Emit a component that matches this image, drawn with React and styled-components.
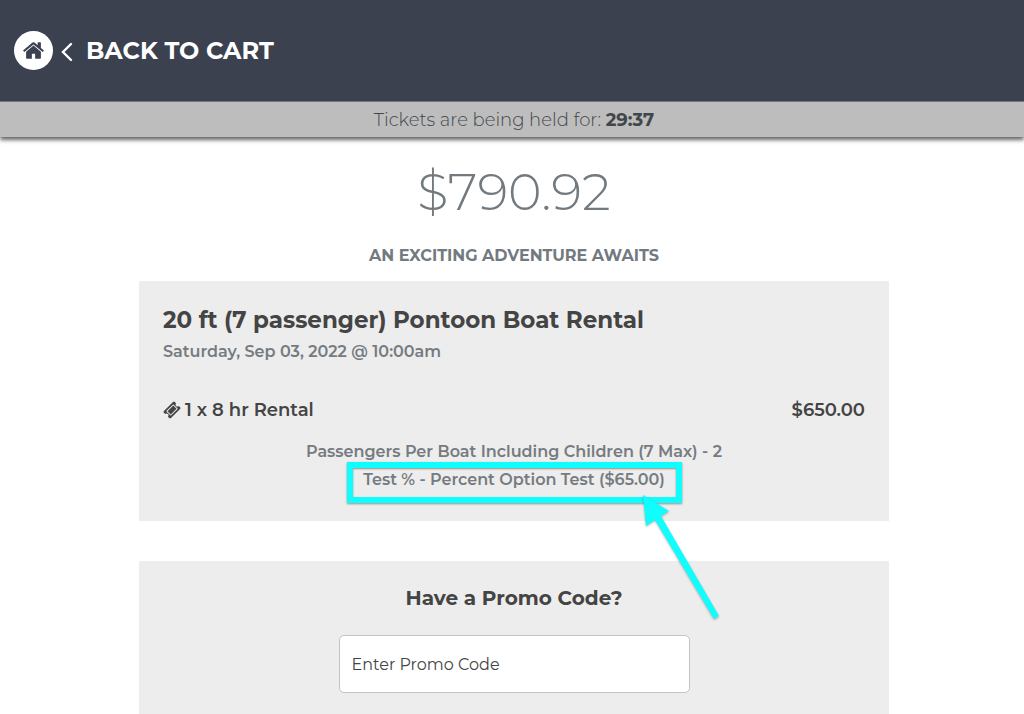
import React from "react";
import styled, { createGlobalStyle } from "styled-components";

const GlobalStyle = createGlobalStyle`
  *, *::before, *::after { box-sizing: border-box; }
  body {
    margin: 0;
    background: #fff;
    color: #444;
    font-family: Montserrat, Inter, "Open Sans", sans-serif;
    font-size: 16px;
    line-height: 24px;
  }
`;

const Header = styled.header`
  display: flex;
  align-items: center;
  gap: 7px;
  min-height: 101px;
  padding: 0 14px;
  background: #3c4150;
`;

const HomeLink = styled.a`
  display: grid;
  place-items: center;
  width: 39px;
  height: 39px;
  border-radius: 50%;
  background: #fff;
  color: #3c4150;
`;

const BackLink = styled.a`
  display: flex;
  align-items: center;
  gap: 12px;
  color: #fff;
  font-size: 24px;
  font-weight: 700;
  line-height: 32px;
  text-decoration: none;
  text-transform: uppercase;
`;

const HoldBar = styled.div`
  padding: 6px 0 5px 4px;
  border-top: 1px solid #747985;
  background: #bdbdbd;
  box-shadow: 0 3px 4px rgba(0, 0, 0, 0.6);
  color: #3f474c;
  font-size: 18px;
  font-weight: 300;
  text-align: center;

  strong { font-weight: 700; }
`;

const Main = styled.main`
  display: flex;
  flex-direction: column;
  align-items: center;
  padding: 23px 12px 0 16px;
`;

const Total = styled.p`
  margin: 0;
  color: #727a7f;
  font-size: 51px;
  font-weight: 300;
  line-height: 64px;
`;

const Tagline = styled.p`
  margin: 20px 0 13px;
  color: #727a7f;
  font-weight: 700;
  text-transform: uppercase;
`;

const Card = styled.section`
  width: 100%;
  max-width: 750px;
  margin-bottom: 40px;
  padding: 24px;
  background: #ededed;
`;

const Title = styled.h1`
  margin: 0 0 3px;
  font-size: 23px;
  font-weight: 700;
  line-height: 30px;
`;

const Muted = styled.p`
  margin: 0;
  color: #757b80;
  font-weight: 600;
  line-height: 28px;
`;

const LineItem = styled.div`
  display: flex;
  align-items: center;
  justify-content: space-between;
  margin: 32px 0 16px;
  font-size: 18px;
  font-weight: 600;
`;

const ItemName = styled.span`
  display: flex;
  align-items: center;
  gap: 4px;
`;

const Options = styled.div`
  display: flex;
  flex-direction: column;
  align-items: center;
  padding-bottom: 3px;
`;

const Highlighted = styled(Muted)`
  position: relative;

  &::after {
    content: "";
    position: absolute;
    inset: -4px -17px -9px -16px;
    border: 6px solid #10fdfd;
    box-shadow: 0 1px 2px rgba(0, 0, 0, 0.4), inset 0 1px 2px rgba(0, 0, 0, 0.4);
  }
`;

const Arrow = styled.svg`
  position: absolute;
  z-index: 1;
  top: 29px;
  right: -56px;
  overflow: visible;
  filter: drop-shadow(0 1px 1px rgba(0, 0, 0, 0.3));
`;

const PromoForm = styled.form`
  display: flex;
  flex-direction: column;
  align-items: center;
  gap: 24px;
`;

const PromoLabel = styled.label`
  font-size: 20px;
  font-weight: 700;
  line-height: 26px;
`;

const PromoInput = styled.input`
  width: 351px;
  max-width: 100%;
  height: 58px;
  padding: 0 12px;
  border: 1px solid #c4c4c4;
  border-radius: 5px;
  background: #fff;
  color: #444;
  font: inherit;

  &::placeholder { color: #444; opacity: 1; }
`;

function HomeIcon() {
  return (
    <svg width="23" height="23" viewBox="0 0 1792 1792" fill="currentColor" aria-hidden="true">
      <path d="M1472 992v480q0 26-19 45t-45 19h-384v-384h-256v384h-384q-26 0-45-19t-19-45v-480q0-1 .5-3t.5-3l575-474 575 474q1 2 1 6zm223-69l-62 74q-8 9-21 11h-3q-13 0-21-7l-692-577-692 577q-12 8-24 7-13-2-21-11l-62-74q-8-10-7-23.5t11-21.5l719-599q32-26 76-26t76 26l244 204v-195q0-14 9-23t23-9h192q14 0 23 9t9 23v408l219 182q10 8 11 21.5t-7 23.5z" />
    </svg>
  );
}

function ChevronIcon() {
  return (
    <svg width="14" height="22" viewBox="0 0 14 22" fill="none" stroke="currentColor" strokeWidth="2.4" strokeLinecap="round" aria-hidden="true">
      <path d="M11 4 3 12l8 8" />
    </svg>
  );
}

function TicketIcon() {
  return (
    <svg width="18" height="18" viewBox="0 0 1792 1792" fill="currentColor" aria-hidden="true">
      <path d="M1024 452l316 316-572 572-316-316zm-211 979l618-618q19-19 19-45t-19-45l-362-362q-18-18-45-18t-45 18l-618 618q-19 19-19 45t19 45l362 362q18 18 45 18t45-18zm889-637l-907 908q-37 37-90.5 37t-90.5-37l-126-126q56-56 56-136t-56-136-136-56-136 56l-125-126q-37-37-37-90.5t37-90.5l907-906q37-37 90.5-37t90.5 37l125 125q-56 56-56 136t56 136 136 56 136-56l126 125q37 37 37 90.5t-37 90.5z" />
    </svg>
  );
}

export default function App() {
  return (
    <>
      <GlobalStyle />
      <Header>
        <HomeLink href="#home" aria-label="Home"><HomeIcon /></HomeLink>
        <BackLink href="#cart"><ChevronIcon />Back to cart</BackLink>
      </Header>
      <HoldBar>Tickets are being held for: <strong>29:37</strong></HoldBar>
      <Main>
        <Total>$790.92</Total>
        <Tagline>An exciting adventure awaits</Tagline>
        <Card>
          <Title>20 ft (7 passenger) Pontoon Boat Rental</Title>
          <Muted>Saturday, Sep 03, 2022 @ 10:00am</Muted>
          <LineItem>
            <ItemName><TicketIcon />1 x 8 hr Rental</ItemName>
            <span>$650.00</span>
          </LineItem>
          <Options>
            <Muted>Passengers Per Boat Including Children (7 Max) - 2</Muted>
            <Highlighted>
              Test % - Percent Option Test ($65.00)
              <Arrow width="78" height="126" viewBox="0 0 78 126" fill="#10fdfd" aria-hidden="true">
                <path d="M0 0 26 16 18 21 76 121 71 124 12 25 3 31Z" />
              </Arrow>
            </Highlighted>
          </Options>
        </Card>
        <Card>
          <PromoForm>
            <PromoLabel htmlFor="promo">Have a Promo Code?</PromoLabel>
            <PromoInput id="promo" type="text" placeholder="Enter Promo Code" />
          </PromoForm>
        </Card>
      </Main>
    </>
  );
}
